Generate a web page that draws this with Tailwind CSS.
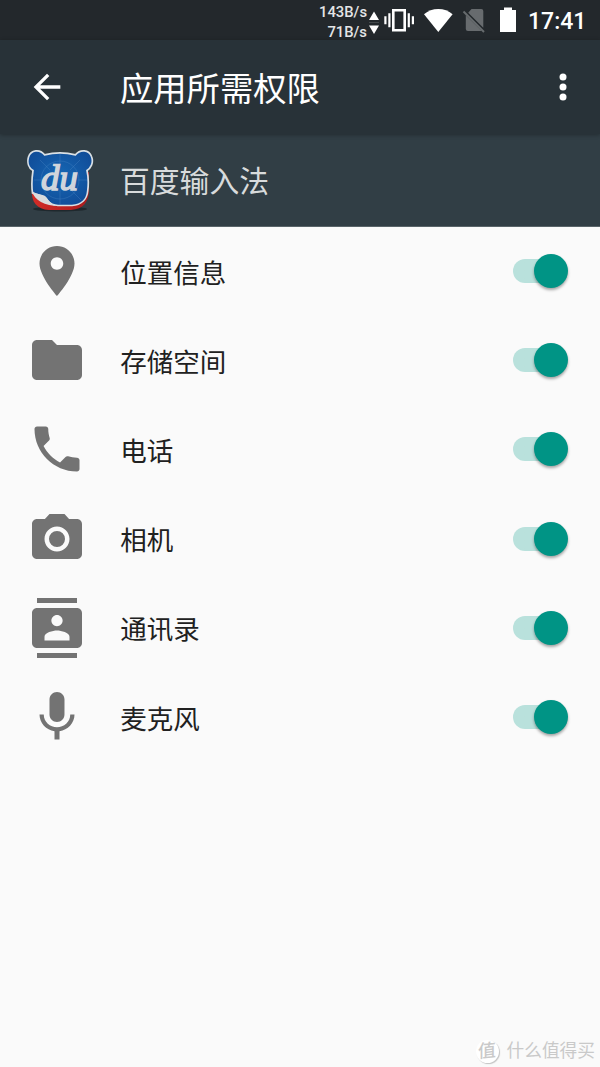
<!DOCTYPE html>
<html lang="zh-CN">
<head>
  <meta charset="UTF-8">
  <meta name="viewport" content="width=device-width, initial-scale=1.0">
  <title>应用所需权限</title>
  <script src="https://cdn.jsdelivr.net/npm/@tailwindcss/browser@4"></script>
</head>
<body class="bg-[#fafafa] font-['Roboto','Noto_Sans_CJK_SC',sans-serif]">
  <div class="relative flex h-[1067px] w-[600px] flex-col overflow-hidden">

    <!-- Status bar -->
    <div class="flex h-10 shrink-0 items-center bg-[#23282c] text-white">
      <div class="flex w-[367px] flex-col pt-[5px] text-right text-[14.8px] leading-[19.5px] font-medium text-[#e4e5e6]">
        <span>143B/s</span>
        <span>71B/s</span>
      </div>
      <svg class="h-10 w-[161px]" viewBox="367 0 161 40" fill="#fff">
        <path d="M374 11.5l5 8.5h-10zM374 34l5-8.5h-10z"/>
        <path d="M369 22h10v1h-10z" opacity=".15"/>
        <path fill="none" stroke="#fff" stroke-width="2.6" d="M393.3 10.3h11.4v20h-11.4z"/>
        <path d="M388.3 13.3h2.2v14h-2.2zM384.3 16.3h2.2v8h-2.2zM407.7 13.3h2.2v14h-2.2zM411.8 16.3h2.2v8h-2.2z"/>
        <path d="M438.3 32L424 14.2C428 10.8 433 9 438.3 9S448.7 10.8 452.6 14.2z"/>
        <path fill="#676b6e" d="M471.5 9H481.3Q483.3 9 483.3 11V27.8L468.2 12.7zM465.8 15.2L481.8 31H468Q465.8 31 465.8 29z"/>
        <path fill="none" stroke="#676b6e" stroke-width="2" d="M463.5 11.5L484 32"/>
        <path d="M504 7.5h8V10h4v22h-16V10h4z"/>
      </svg>
      <span class="pt-[5px] text-[23px] font-medium">17:41</span>
    </div>

    <!-- App bar -->
    <header class="z-10 flex h-[93.5px] shrink-0 items-center bg-[#283238] pl-[27px] text-white shadow-[0_1px_4px_rgba(0,0,0,0.3)]">
      <svg class="size-10" viewBox="0 0 24 24" fill="currentColor">
        <path d="M20 11H7.83l5.59-5.59L12 4l-8 8 8 8 1.41-1.41L7.83 13H20v-2z"/>
      </svg>
      <h1 class="ml-[53px] grow pt-[7px] text-[33.3px] leading-10">应用所需权限</h1>
      <svg class="mr-[17px] size-10" viewBox="0 0 24 24" fill="currentColor">
        <circle cx="12" cy="6" r="2.1"/>
        <circle cx="12" cy="12" r="2.1"/>
        <circle cx="12" cy="18" r="2.1"/>
      </svg>
    </header>

    <!-- App name -->
    <div class="flex h-[93px] shrink-0 items-center border-b border-[#596469] bg-[#313e45] pl-[26px]">
      <svg class="h-[66px] w-[68px]" viewBox="26 147 68 66">
        <defs>
          <radialGradient id="face" cx=".5" cy=".45" r=".6">
            <stop offset="0" stop-color="#1667b4"/>
            <stop offset="1" stop-color="#104c98"/>
          </radialGradient>
          <linearGradient id="red" x1="0" y1="0" x2="1" y2="0">
            <stop offset="0" stop-color="#d32c27"/>
            <stop offset="1" stop-color="#a91b1d"/>
          </linearGradient>
        </defs>
        <ellipse cx="60" cy="209" rx="27" ry="2.5" fill="#1f282d"/>
        <path fill="url(#red)" d="M32 190C31 202 37 209.5 49 210H71C83 209 89 202 89 190V172H34z"/>
        <path fill="url(#face)" stroke="#d9e0e5" stroke-width="1.7" d="M44.5 154.8C54 152.5 66 152.5 75.5 154.8C80 149 89 149.5 91.5 156.5C94 163 90.5 168.5 87 170.5C88.5 177 88.5 185 87.7 191C87 199.5 81 204.8 72 205.5H58C53 205.300 50.5 204 47.5 200.5C44 195.5 39.5 195.5 32.5 193C31.5 186 32 177 33 170.5C28.5 168 27 162.5 28.500 157C31 149.5 40 149 44.5 154.8z"/>
        <g fill="none" stroke="#4a88c6" stroke-opacity=".35">
          <path d="M60 154v12M60 190v15M34 180h10M78 180h9M40 160l10 10M80 160l-10 10M71 190l10 10"/>
          <circle cx="60" cy="180" r="19"/>
        </g>
        <path fill="#d9dbdd" d="M32 191C38 196 44 193 47 198C50 203 53 205.5 59 206C45 206 34 200 32 191z"/>
        <text x="41" y="189.5" textLength="37" lengthAdjust="spacingAndGlyphs" font-family="Liberation Serif, serif" font-size="36" font-style="italic" fill="#d0d5dc" stroke="#d0d5dc" stroke-width="1.5">du</text>
      </svg>
      <span class="ml-[26px] pt-[5px] text-[29.8px] leading-9 text-[#d8dbdc]">百度输入法</span>
    </div>

    <!-- Permissions -->
    <ul id="permissions" class="flex flex-col text-[26.5px] text-[#212121]"></ul>

    <!-- Watermark -->
    <div class="absolute right-[5px] bottom-[4px] flex items-center gap-2 text-[#c9c9c9]">
      <span class="flex size-[23px] items-center justify-center rounded-full bg-white text-[18px] leading-none font-medium shadow-[1px_1px_1px_#c4c4c4]"><span class="-rotate-6 -skew-x-6">值</span></span>
      <span class="text-[17.7px] leading-6">什么值得买</span>
    </div>
  </div>

  <script>
    const permissions = [
      { name: '位置信息', icon: 'M12 2C8.13 2 5 5.13 5 9c0 5.25 7 13 7 13s7-7.75 7-13c0-3.87-3.13-7-7-7zm0 9.5c-1.38 0-2.5-1.12-2.5-2.5s1.12-2.5 2.5-2.5 2.5 1.12 2.5 2.5-1.12 2.5-2.5 2.5z' },
      { name: '存储空间', icon: 'M10 4H4c-1.1 0-1.99.9-1.99 2L2 18c0 1.1.9 2 2 2h16c1.1 0 2-.9 2-2V8c0-1.1-.9-2-2-2h-8l-2-2z' },
      { name: '电话', icon: 'M6.62 10.79c1.44 2.83 3.76 5.14 6.59 6.59l2.2-2.2c.27-.27.67-.36 1.02-.24 1.12.37 2.33.57 3.57.57.55 0 1 .45 1 1V20c0 .55-.45 1-1 1-9.39 0-17-7.61-17-17 0-.55.45-1 1-1h3.5c.55 0 1 .45 1 1 0 1.25.2 2.45.57 3.57.11.35.03.74-.25 1.02l-2.2 2.2z' },
      { name: '相机', icon: 'M12 8.8a3.2 3.2 0 1 0 0 6.4a3.2 3.2 0 1 0 0-6.4zM9 2L7.17 4H4c-1.1 0-2 .9-2 2v12c0 1.1.9 2 2 2h16c1.1 0 2-.9 2-2V6c0-1.1-.9-2-2-2h-3.17L15 2H9zm3 15c-2.76 0-5-2.24-5-5s2.24-5 5-5 5 2.24 5 5-2.24 5-5 5z' },
      { name: '通讯录', icon: 'M20 0H4v2h16V0zM4 24h16v-2H4v2zM20 4H4c-1.1 0-2 .9-2 2v12c0 1.1.9 2 2 2h16c1.1 0 2-.9 2-2V6c0-1.1-.9-2-2-2zm-8 2.75c1.24 0 2.25 1.01 2.25 2.25s-1.01 2.25-2.25 2.25S9.75 10.24 9.75 9 10.76 6.75 12 6.75zM17 17H7v-1.5c0-1.67 3.33-2.5 5-2.5s5 .83 5 2.5V17z' },
      { name: '麦克风', icon: 'M12 14c1.66 0 2.99-1.34 2.99-3L15 5c0-1.66-1.34-3-3-3S9 3.34 9 5v6c0 1.66 1.34 3 3 3zm5.3-3c0 3-2.54 5.1-5.3 5.1S6.7 14 6.7 11H5c0 3.41 2.72 6.23 6 6.72V21h2v-3.28c3.28-.48 6-3.3 6-6.72h-1.7z' }
    ];

    const list = document.getElementById('permissions');

    permissions.forEach(item => {
      const row = `
        <li class="flex h-[89.2px] items-center pr-8 pl-[26.7px]">
          <svg class="size-[60px]" viewBox="0 0 24 24" fill="#737373"><path d="${item.icon}"/></svg>
          <span class="ml-[33.5px] grow pt-[5px] leading-10">${item.name}</span>
          <span class="flex h-6 w-[55px] items-center justify-end rounded-full bg-linear-to-r from-[#b9e1dc] from-80% to-transparent to-80%">
            <span class="size-[34px] shrink-0 rounded-full bg-[#009485] shadow-[0_2px_3px_rgba(0,0,0,0.35)]"></span>
          </span>
        </li>
      `;
      list.insertAdjacentHTML('beforeend', row);
    });
  </script>
</body>
</html>
